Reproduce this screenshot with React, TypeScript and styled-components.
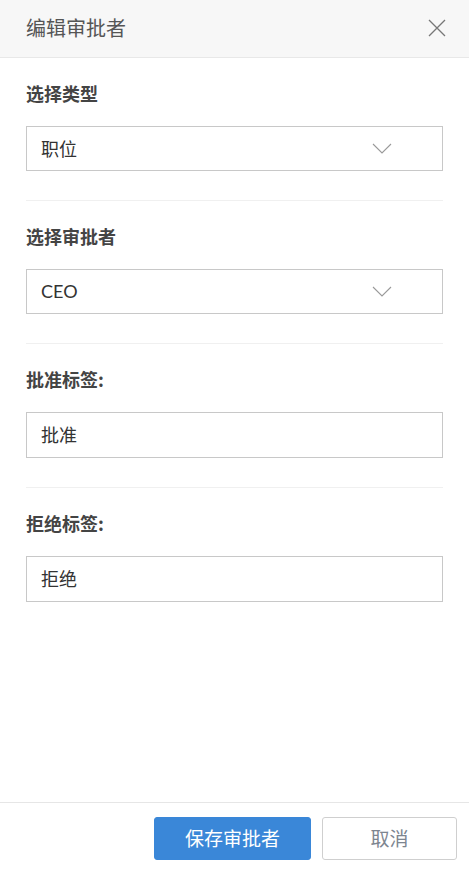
import styled, { createGlobalStyle } from 'styled-components';

const GlobalStyle = createGlobalStyle`
  html, body {
    margin: 0;
    padding: 0;
    height: 100%;
    background: #fff;
  }
  body {
    font-family: Lato, "Noto Sans CJK SC", sans-serif;
  }
  #root {
    height: 100%;
  }
`;

type Field = {
  label: string;
  value: string;
  kind: 'select' | 'input';
};

const fields: Field[] = [
  { label: '选择类型', value: '职位', kind: 'select' },
  { label: '选择审批者', value: 'CEO', kind: 'select' },
  { label: '批准标签:', value: '批准', kind: 'input' },
  { label: '拒绝标签:', value: '拒绝', kind: 'input' },
];

function CloseIcon() {
  return (
    <svg width="20" height="20" viewBox="0 0 20 20" fill="none">
      <path d="M2 2L18 18M18 2L2 18" stroke="#777" strokeWidth="1.3" />
    </svg>
  );
}

function ChevronDown() {
  return (
    <svg width="20" height="11" viewBox="0 0 20 11" fill="none">
      <path d="M1 1L10 10L19 1" stroke="#999" strokeWidth="1.1" />
    </svg>
  );
}

export default function App() {
  return (
    <>
      <GlobalStyle />
      <Panel>
        <Header>
          <Title>编辑审批者</Title>
          <CloseButton aria-label="关闭">
            <CloseIcon />
          </CloseButton>
        </Header>
        <Body>
          {fields.map((f) => (
            <Section key={f.label}>
              <Label>{f.label}</Label>
              {f.kind === 'select' ? (
                <SelectBox>
                  <span>{f.value}</span>
                  <Chevron>
                    <ChevronDown />
                  </Chevron>
                </SelectBox>
              ) : (
                <TextInput defaultValue={f.value} />
              )}
            </Section>
          ))}
        </Body>
        <Footer>
          <PrimaryButton>保存审批者</PrimaryButton>
          <GhostButton>取消</GhostButton>
        </Footer>
      </Panel>
    </>
  );
}

const Panel = styled.div`
  height: 100%;
  display: flex;
  flex-direction: column;
  box-sizing: border-box;
`;

const Header = styled.header`
  height: 58px;
  box-sizing: border-box;
  background: #f7f7f7;
  border-bottom: 1px solid #e8e8e8;
  display: flex;
  align-items: center;
  justify-content: space-between;
  padding: 0 22px 2px 26px;
  flex-shrink: 0;
`;

const Title = styled.h1`
  margin: 0;
  font-size: 20px;
  font-weight: 400;
  color: #555;
  font-family: "Noto Sans CJK SC", sans-serif;
`;

const CloseButton = styled.button`
  border: 0;
  background: none;
  padding: 0;
  display: flex;
  cursor: pointer;
`;

const Body = styled.main`
  flex: 1;
  padding: 0 26px 0 26px;
`;

const Section = styled.section`
  padding: 23px 0 29px;
  border-bottom: 1px solid #f0f0f0;

  &:last-child {
    border-bottom: 0;
  }
`;

const Label = styled.div`
  font-size: 18px;
  line-height: 25px;
  font-weight: 700;
  color: #444;
  font-family: "Noto Sans CJK SC", sans-serif;
  margin-bottom: 20px;
`;

const SelectBox = styled.div`
  height: 45px;
  box-sizing: border-box;
  border: 1px solid #c8c8c8;
  display: flex;
  align-items: center;
  justify-content: space-between;
  padding: 0 50px 2px 14px;
  font-size: 18px;
  color: #333;
`;

const Chevron = styled.span`
  display: flex;
  margin-top: 1px;
`;

const TextInput = styled.input`
  display: block;
  width: 100%;
  height: 46px;
  box-sizing: border-box;
  border: 1px solid #c8c8c8;
  padding: 0 14px 2px;
  font-size: 18px;
  color: #333;
  font-family: Lato, "Noto Sans CJK SC", sans-serif;
  outline: none;
`;

const Footer = styled.footer`
  flex-shrink: 0;
  border-top: 1px solid #e6e6e6;
  display: flex;
  justify-content: flex-end;
  gap: 11px;
  padding: 14px 12px 10px;
`;

const BaseButton = styled.button`
  height: 43px;
  box-sizing: border-box;
  border-radius: 3px;
  font-size: 19px;
  font-family: "Noto Sans CJK SC", sans-serif;
  cursor: pointer;
  padding: 0 0 2px;
`;

const PrimaryButton = styled(BaseButton)`
  width: 157px;
  background: #3a87d8;
  border: 1px solid #3a87d8;
  color: #fff;
`;

const GhostButton = styled(BaseButton)`
  width: 135px;
  background: #fff;
  border: 1px solid #cfcfcf;
  color: #7d8590;
`;
